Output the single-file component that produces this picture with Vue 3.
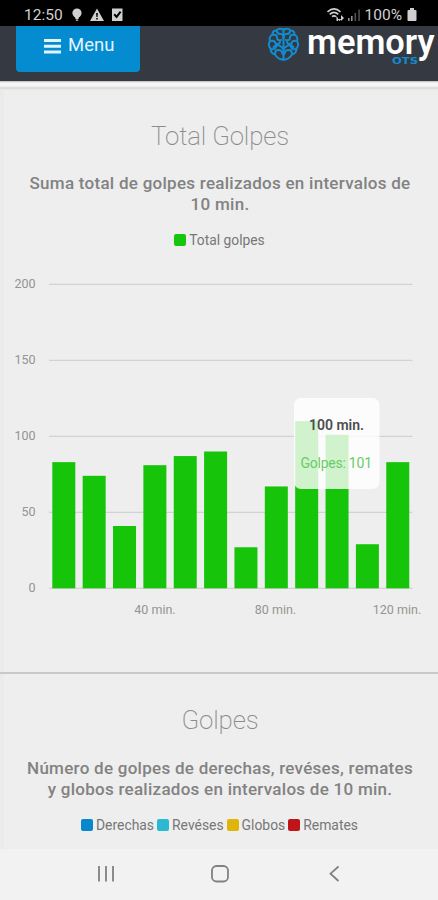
<template>
    <div class="phone">
        <div class="status">
            <span class="clock">12:50</span>
            <svg class="status-left" width="54" height="16" viewBox="0 0 54 16">
                <circle cx="6" cy="6" r="4.6" />
                <path d="M3.5 8h5L7.5 12h-3z M4.8 12.6h2.4v1.2h-2.4z" />
                <path fill-rule="evenodd" d="M26 1.5L33 14H19z M25.1 6h1.8l-.3 4h-1.2z M25.2 11h1.6v1.5h-1.6z" />
                <path d="M41 1.5h10.5v12.5h-10.5z" />
                <path class="cut" d="M43.2 7.3l2.4 2.6 4-5.2" />
            </svg>
            <svg class="status-right" width="36" height="16" viewBox="0 0 36 16">
                <g class="wifi">
                    <path d="M1.5 4.8Q8 -1 14.5 4.8" />
                    <path d="M3.7 7.4Q8 3.3 12.3 7.4" />
                    <path d="M6 9.7Q8 8 10 9.7" />
                </g>
                <path d="M10 9l2 2v3h-1.5v-3z M13.5 14l-2-2h4z M15 8l3 3-3 3z" />
                <path opacity=".7" d="M22 11h1.6v3H22z M25 9h1.6v5H25z" />
                <path opacity=".4" d="M28.5 6h1.6v8h-1.6z M32.3 2.5h1.5V14h-1.5z" />
            </svg>
            <span class="percent">100%</span>
            <svg class="battery" width="10" height="14" viewBox="0 0 10 14">
                <path d="M3 0h4v2h1.5q1 0 1 1v9q0 1-1 1h-7q-1 0-1-1V3q0-1 1-1H3z" />
            </svg>
        </div>

        <header class="topbar">
            <button class="menu">
                <svg width="17" height="15" viewBox="0 0 17 15">
                    <path d="M0 0h17v3H0z M0 5.7h17v3H0z M0 11.4h17v3H0z" />
                </svg>
                <span>Menu</span>
            </button>
            <svg class="logo" width="172" height="42" viewBox="266 25 172 42">
                <g class="brain">
                    <path d="M283 28.5Q279 26.5 276.5 29.5Q272.5 29.5 272.5 33.5Q268.5 36 270 40Q267.5 44 270.5 47.5Q270.5 52.5 275 53.5Q278 58.5 283 58.5" />
                    <path d="M284 28.5Q288 26.5 290.5 29.5Q294.5 29.5 294.5 33.5Q298.5 36 297 40Q299.5 44 296.5 47.5Q296.5 52.5 292 53.5Q289 58.5 284 58.5" />
                    <path d="M283.5 28V59" />
                    <path d="M277 30q0 3 3.5 3t3 4 M273 34q4-1 4 2.5t4 2.5 M270.5 40q4-1 5 2t-2 4 M276 43q4 0 4-2 M271 48q4 1 5-2t4-1 3 3 M275 53q0-4 3.5-4t4 4" />
                    <path d="M290 30q0 3-3.5 3t-3 4 M294 34q-4-1-4 2.5t-4 2.5 M296.5 40q-4-1-5 2t2 4 M291 43q-4 0-4-2 M296 48q-4 1-5-2t-4-1-3 3 M292 53q0-4-3.5-4t-4 4" />
                </g>
                <text class="brand" x="307" y="53" textLength="127.5" lengthAdjust="spacingAndGlyphs">memory</text>
                <text class="ots" x="392" y="62.5" textLength="26" lengthAdjust="spacingAndGlyphs">OTS</text>
            </svg>
        </header>

        <main>
            <div class="edge"></div>
            <section class="card first">
                <h2>Total Golpes</h2>
                <p>Suma total de golpes realizados en intervalos de 10 min.</p>
                <div class="legend">
                    <span class="key"><i class="green"></i>Total golpes</span>
                </div>
                <svg class="chart" width="438" height="360" viewBox="0 270 438 360">
                    <g v-for="tick in ticks" :key="tick">
                        <line x1="49" x2="412.5" :y1="y(tick)" :y2="y(tick)" />
                        <text x="35.5" :y="y(tick) + 4" text-anchor="end">{{ tick }}</text>
                    </g>
                    <rect
                        v-for="(value, i) in golpes"
                        :key="i"
                        class="bar"
                        :x="52.3 + i * 30.36"
                        :y="y(value)"
                        width="23"
                        :height="value * 1.52"
                    />
                    <text v-for="label in labels" :key="label.text" :x="label.x" y="613.5" text-anchor="middle">{{ label.text }}</text>
                    <rect class="tip" x="294" y="398" width="85.5" height="91" rx="7" />
                    <text class="tip-title" x="309" y="430" textLength="55">100 min.</text>
                    <text class="tip-value" x="300.5" y="468" textLength="71.5">Golpes: 101</text>
                </svg>
            </section>

            <section class="card second">
                <h2>Golpes</h2>
                <p>Número de golpes de derechas, revéses, remates y globos realizados en intervalos de 10 min.</p>
                <div class="legend">
                    <span v-for="key in keys" :key="key.name" class="key"><i :class="key.color"></i>{{ key.name }}</span>
                </div>
            </section>
        </main>

        <nav class="navbar">
            <svg width="438" height="51" viewBox="0 849 438 51">
                <path d="M99 866v15.5 M106 866v15.5 M113 866v15.5" />
                <rect x="212" y="866" width="16" height="15.5" rx="4.5" />
                <path d="M338.5 866.5L330.5 873.7L338.5 881" />
            </svg>
        </nav>
    </div>
</template>

<script setup>
const ticks = [200, 150, 100, 50, 0]

const golpes = [83, 74, 41, 81, 87, 90, 27, 67, 110, 101, 29, 83]

const labels = [
    { text: '40 min.', x: 155 },
    { text: '80 min.', x: 275.5 },
    { text: '120 min.', x: 397 },
]

const keys = [
    { name: 'Derechas', color: 'blue' },
    { name: 'Revéses', color: 'cyan' },
    { name: 'Globos', color: 'yellow' },
    { name: 'Remates', color: 'red' },
]

const y = (value) => 588.3 - value * 1.52
</script>

<style>
body {
    background: #eeeeee;
}
</style>

<style scoped>
.phone {
    display: flex;
    flex-direction: column;
    width: 438px;
    height: 900px;
    overflow: hidden;
    background: #eeeeee;
    font-family: Roboto, sans-serif;
}

.status {
    display: flex;
    align-items: center;
    flex: none;
    height: 26px;
    padding: 3px 21px 0 24px;
    box-sizing: border-box;
    background: #000;
    color: #d0d0d0;
    font-size: 15.5px;
}

.status svg {
    fill: #d0d0d0;
}

.clock {
    width: 39px;
}

.status-left {
    margin-left: 8px;
}

.status-left .cut {
    fill: none;
    stroke: #000;
    stroke-width: 2;
}

.status-right {
    margin-left: auto;
}

.wifi {
    fill: none;
    stroke: #d0d0d0;
    stroke-width: 1.6;
}

.percent {
    margin-left: 3px;
    font-size: 15.5px;
}

.battery {
    margin-left: 5px;
}

.topbar {
    display: flex;
    justify-content: space-between;
    align-items: flex-start;
    flex: none;
    height: 55px;
    padding-left: 16px;
    background: #353a42;
}

.menu {
    display: flex;
    align-items: flex-start;
    gap: 7px;
    width: 124px;
    height: 46px;
    padding: 9px 0 0 28px;
    border: 0;
    border-radius: 0 0 4px 4px;
    background: #058bd0;
    color: #e2f5ff;
    font: 18.5px/21px Roboto, sans-serif;
}

.menu svg {
    margin-top: 4px;
    fill: #e2f5ff;
}

.brain {
    fill: none;
    stroke: #138bce;
    stroke-width: 2;
    stroke-linecap: round;
    stroke-linejoin: round;
}

.brand {
    fill: #fff;
    font: 600 35.5px Roboto, sans-serif;
}

.ots {
    fill: #138bce;
    font: bold 8px "DejaVu Sans", sans-serif;
}

main {
    flex: 1;
    min-height: 0;
    overflow: hidden;
    background: linear-gradient(to right, #ebebeb 4px, #eeeeee 4px);
}

/* soft strip under the top bar */
.edge {
    height: 9px;
    background: linear-gradient(#b8b8ba 0, #f8f8f8 2px, #f5f5f5 5px, #d8d8d8 7px, #e2e2e2 8px, #eeeeee 9px);
}

.card {
    display: flex;
    flex-direction: column;
    align-items: center;
    text-align: center;
}

.first {
    height: 582px;
    border-bottom: 2px solid #c8c8c8;
}

h2 {
    margin: 30px 0 0;
    padding-left: 2px;
    color: #8c8c8c;
    font-size: 25.8px;
    font-weight: 200;
    line-height: 32px;
    letter-spacing: -0.15px;
}

p {
    width: 388px;
    margin: 21px 0 0;
    padding-left: 2px;
    color: #828282;
    font-size: 17px;
    font-weight: 500;
    line-height: 21px;
    letter-spacing: 0.27px;
}

.legend {
    display: flex;
    gap: 3px;
    margin-top: 16px;
    padding-left: 1px;
    color: #777;
    font-size: 13.8px;
    font-weight: 400;
    line-height: 18px;
}

.key {
    display: flex;
    align-items: center;
    gap: 3px;
}

.key i {
    width: 12px;
    height: 12px;
    border-radius: 2px;
}

.green {
    background: #16c60c;
}

.blue {
    background: #0788cd;
}

.cyan {
    background: #2bb8d1;
}

.yellow {
    background: #e0b50b;
}

.red {
    background: #c01518;
}

.chart {
    flex: none;
    margin-top: 21px;
}

.chart line {
    stroke: #d2d2d2;
    stroke-width: 1.3;
}

.chart text {
    fill: #949494;
    font-size: 12.5px;
}

.chart .bar {
    fill: #16c40a;
}

.chart .tip {
    fill: #fff;
    fill-opacity: 0.8;
}

.chart .tip-title {
    fill: #4d4d4d;
    font-size: 14px;
    font-weight: 600;
}

.chart .tip-value {
    fill: #6bcb66;
    font-size: 14px;
}

.second h2 {
    margin-top: 30px;
}

.second p {
    margin-top: 22px;
}

.second .legend {
    margin-top: 16px;
    font-size: 13.9px;
}

.navbar {
    flex: none;
    height: 51px;
    background: #f2f2f2;
}

.navbar svg {
    display: block;
    fill: none;
    stroke: #818181;
    stroke-width: 1.8;
}
</style>
